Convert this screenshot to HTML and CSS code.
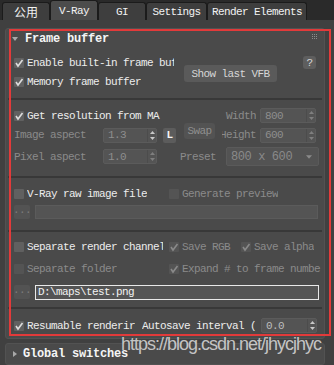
FILE: index.html
```html
<!DOCTYPE html>
<html>
<head>
  <meta charset="utf-8">
  <link rel="stylesheet" href="styles.css">
  <title>V-Ray Frame buffer</title>
</head>
<body>
  <div class="tabs">
    <div class="tab cjk">公用</div>
    <div class="tab active">V-Ray</div>
    <div class="tab">GI</div>
    <div class="tab tab-settings">Settings</div>
    <div class="tab tab-render">Render Elements</div>
  </div>

  <div class="panel">
    <div class="rollout">
      <div class="roll-head">
        <span class="tri-down"></span>
        <span class="roll-title">Frame buffer</span>
        <svg class="grip" width="6" height="6" viewBox="0 0 6 6">
          <rect x="0" y="0" width="1" height="1"/><rect x="2" y="0" width="1" height="1"/><rect x="4" y="0" width="1" height="1"/>
          <rect x="0" y="2" width="1" height="1"/><rect x="2" y="2" width="1" height="1"/><rect x="4" y="2" width="1" height="1"/>
          <rect x="0" y="4" width="1" height="1"/><rect x="2" y="4" width="1" height="1"/><rect x="4" y="4" width="1" height="1"/>
        </svg>
      </div>

      <!-- frame buffer -->
      <div class="sec sec-fb">
        <div class="fb-left">
          <div class="row"><span class="cb on"><svg viewBox="0 0 10 10"><polyline points="2,5 4,8 8.5,2"/></svg></span><span class="txt clip-fb">Enable built-in frame buf</span></div>
          <div class="row"><span class="cb on"><svg viewBox="0 0 10 10"><polyline points="2,5 4,8 8.5,2"/></svg></span><span class="txt">Memory frame buffer</span></div>
        </div>
        <div class="btn btn-vfb">Show last VFB</div>
        <div class="btn btn-help">?</div>
      </div>
      <div class="sep"></div>

      <!-- resolution -->
      <div class="sec sec-res">
        <div class="res-grid">
          <div class="row g-getres"><span class="cb on"><svg viewBox="0 0 10 10"><polyline points="2,5 4,8 8.5,2"/></svg></span><span class="txt clip-res">Get resolution from MA</span></div>
          <div class="lbl dim g-wlbl">Width</div>
          <div class="spin g-wspin"><span>800</span><i class="arrows"><svg viewBox="0 0 5 9"><polygon points="0,3 2.5,0 5,3"/><polygon points="0,6 5,6 2.5,9"/></svg></i></div>

          <div class="lbl dim g-ialbl">Image aspect</div>
          <div class="spin g-iaspin"><span>1.3</span><i class="arrows lit"><svg viewBox="0 0 5 9"><polygon points="0,3 2.5,0 5,3"/><polygon points="0,6 5,6 2.5,9"/></svg></i></div>
          <div class="btn btn-l g-l">L</div>
          <div class="btn btn-swap g-swap">Swap</div>
          <div class="lbl dim g-hlbl">Height</div>
          <div class="spin g-hspin"><span>600</span><i class="arrows"><svg viewBox="0 0 5 9"><polygon points="0,3 2.5,0 5,3"/><polygon points="0,6 5,6 2.5,9"/></svg></i></div>

          <div class="lbl dim g-palbl">Pixel aspect</div>
          <div class="spin g-paspin"><span>1.0</span><i class="arrows"><svg viewBox="0 0 5 9"><polygon points="0,3 2.5,0 5,3"/><polygon points="0,6 5,6 2.5,9"/></svg></i></div>
          <div class="lbl dim g-prelbl">Preset</div>
          <div class="drop g-drop"><span>800 x 600</span><svg viewBox="0 0 7 4"><polygon points="0,0 7,0 3.5,4"/></svg></div>
        </div>
      </div>
      <div class="sep"></div>

      <!-- raw image -->
      <div class="sec sec-raw">
        <div class="row">
          <div class="cell-l"><span class="cb"></span><span class="txt">V-Ray raw image file</span></div>
          <span class="cb dimbox"></span><span class="txt dim">Generate preview</span>
        </div>
        <div class="path-row">
          <div class="btn btn-dots">...</div>
          <div class="field"></div>
        </div>
      </div>
      <div class="sep"></div>

      <!-- render channels -->
      <div class="sec sec-chan">
        <div class="row">
          <div class="cell-l"><span class="cb"></span><span class="txt clip-chan">Separate render channel</span></div>
          <span class="cb dimbox on"><svg viewBox="0 0 10 10"><polyline points="2,5 4,8 8.5,2"/></svg></span><span class="txt dim w-rgb">Save RGB</span>
          <span class="cb dimbox on"><svg viewBox="0 0 10 10"><polyline points="2,5 4,8 8.5,2"/></svg></span><span class="txt dim">Save alpha</span>
        </div>
        <div class="row row-folder">
          <div class="cell-l"><span class="cb dimbox"></span><span class="txt dim">Separate folder</span></div>
          <span class="cb dimbox on"><svg viewBox="0 0 10 10"><polyline points="2,5 4,8 8.5,2"/></svg></span><span class="txt dim clip-expand">Expand # to frame numbe</span>
        </div>
        <div class="path-row path-row-2">
          <div class="btn btn-dots">...</div>
          <div class="field field-on">D:\maps\test.png</div>
        </div>
      </div>
      <div class="sep"></div>

      <!-- resumable -->
      <div class="sec sec-resume">
        <div class="row">
          <div class="cell-resume"><span class="cb on"><svg viewBox="0 0 10 10"><polyline points="2,5 4,8 8.5,2"/></svg></span><span class="txt clip-resume">Resumable renderir</span></div>
          <span class="txt w-auto">Autosave interval (</span>
          <div class="spin spin-auto"><span>0.0</span><i class="arrows lit"><svg viewBox="0 0 5 9"><polygon points="0,3 2.5,0 5,3"/><polygon points="0,6 5,6 2.5,9"/></svg></i></div>
        </div>
      </div>
    </div>

    <div class="rollout rollout-closed">
      <div class="roll-head">
        <span class="tri-right"></span>
        <span class="roll-title">Global switches</span>
      </div>
    </div>
  </div>

  <div class="mark"></div>
  <div class="watermark">https://blog.csdn.net/jhycjhyc</div>
</body>
</html>
```

FILE: styles.css
```css
* {
  box-sizing: border-box;
}

body {
  margin: 0;
  width: 334px;
  height: 365px;
  overflow: hidden;
  position: relative;
  background-color: #404040;
  color: #ededed;
  font-family: "Liberation Mono", "DejaVu Sans Mono", monospace;
  font-size: 11px;
  letter-spacing: -0.6px;
}

/* tabs */
.tabs {
  display: flex;
  align-items: flex-end;
  height: 20px;
  padding-left: 2px;
  background-color: #2a2a2a;
}

.tab {
  width: 48px;
  height: 18px;
  display: flex;
  align-items: center;
  justify-content: center;
  background-color: #3e3e3e;
  border: 1px solid #1b1b1b;
  border-bottom: none;
  border-radius: 3px 3px 0 0;
  color: #f2f2f2;
}

.tab.cjk {
  font-family: "Noto Sans CJK SC", sans-serif;
  font-size: 12px;
  letter-spacing: 0;
}

.tab.active {
  height: 20px;
  background-color: #4c4c4c;
}

.tab-settings {
  width: 61px;
}

.tab-render {
  width: 100px;
}

/* panel and rollouts */
.panel {
  padding: 8px 0 0 5px;
}

.rollout {
  width: 320px;
  background-color: #4a4a4a;
  border: 1px solid #525252;
  border-radius: 3px;
}

.rollout-closed {
  margin-top: 4px;
}

.roll-head {
  height: 20px;
  display: flex;
  align-items: center;
  padding-left: 6px;
}

.roll-title {
  margin-left: 7px;
  font-size: 12px;
  font-weight: bold;
  letter-spacing: -0.2px;
  color: #f5f5f5;
}

.tri-down {
  width: 0;
  height: 0;
  border-left: 3px solid transparent;
  border-right: 3px solid transparent;
  border-top: 4px solid #a8a8a8;
}

.tri-right {
  width: 0;
  height: 0;
  border-top: 3px solid transparent;
  border-bottom: 3px solid transparent;
  border-left: 4px solid #a8a8a8;
  margin-left: 1px;
  margin-right: -1px;
}

.grip {
  margin-left: auto;
  margin-right: 6px;
  margin-top: -4px;
  fill: #8c8c8c;
}

.sep {
  height: 2px;
  margin: 0 2px;
  background-color: #383838;
}

.sec {
  padding-left: 8px;
}

/* rows and checkboxes */
.row {
  display: flex;
  align-items: center;
  height: 14px;
}

.cell-l {
  display: flex;
  align-items: center;
  width: 155px;
}

.cb {
  flex: none;
  width: 10px;
  height: 10px;
  margin-right: 3px;
  background-color: #606060;
  border-radius: 1px;
}

.cb svg {
  display: block;
  width: 10px;
  height: 10px;
  fill: none;
  stroke: #dcdcdc;
  stroke-width: 1.6;
}

.cb.dimbox {
  background-color: #545454;
}

.cb.dimbox svg {
  stroke: #8a8a8a;
}

.txt {
  white-space: nowrap;
  overflow: hidden;
}

.dim {
  color: #8b8b8b;
}

.lbl {
  white-space: nowrap;
  overflow: hidden;
}

/* buttons */
.btn {
  display: flex;
  align-items: center;
  justify-content: center;
  background-color: #5a5a5a;
  border-radius: 3px;
  color: #d6d6d6;
}

/* frame buffer section */
.sec-fb {
  display: flex;
  height: 49px;
  padding-top: 4px;
}

.fb-left {
  width: 170px;
}

.fb-left .row {
  height: 19px;
}

.clip-fb {
  width: 147px;
}

.btn-vfb {
  width: 93px;
  height: 17px;
  margin-top: 12px;
}

.btn-help {
  width: 13px;
  height: 13px;
  margin-left: 26px;
  margin-top: 3px;
  background-color: #5e5e5e;
}

/* resolution section */
.sec-res {
  padding-top: 8px;
  padding-bottom: 10px;
}

.res-grid {
  display: grid;
  grid-template-columns: 89px 54px 6px 13px 8px 31px 7px 34px 4px 56px;
  grid-template-rows: 15px 16px 19px;
  row-gap: 4px;
  align-items: center;
}

.g-getres { grid-column: 1 / 4; grid-row: 1; }
.clip-res { width: 134px; }
.g-wlbl { grid-column: 8; grid-row: 1; }
.g-wspin { grid-column: 10; grid-row: 1; }
.g-ialbl { grid-column: 1; grid-row: 2; }
.g-iaspin { grid-column: 2; grid-row: 2; }
.g-l { grid-column: 4; grid-row: 2; }
.g-swap { grid-column: 6; grid-row: 1 / 3; }
.g-hlbl { grid-column: 8; grid-row: 2; }
.g-hspin { grid-column: 10; grid-row: 2; }
.g-palbl { grid-column: 1; grid-row: 3; }
.g-paspin { grid-column: 2; grid-row: 3; }
.g-prelbl { grid-column: 5 / 8; grid-row: 3; padding-left: 4px; }
.g-drop { grid-column: 8 / 11; grid-row: 3; margin-left: 4px; margin-right: -3px; }

.g-wlbl,
.g-hlbl {
  display: flex;
  justify-content: flex-end;
}

.spin {
  display: flex;
  align-items: center;
  height: 15px;
  padding-left: 4px;
  background-color: #545454;
  border: 1px solid #5b5b5b;
  border-radius: 2px;
  color: #8e8e8e;
}

.spin span {
  flex: 1;
}

.arrows {
  display: flex;
  align-items: center;
  justify-content: center;
  width: 9px;
  height: 100%;
  border-left: 1px solid #4c4c4c;
}

.arrows svg {
  width: 5px;
  height: 9px;
  fill: #7f7f7f;
}

.arrows.lit svg {
  fill: #c8c8c8;
}

.btn-l {
  height: 15px;
  background-color: #5c5c5c;
  border-radius: 2px;
  color: #f5f5f5;
  font-weight: bold;
}

.btn-swap {
  height: 16px;
  margin-top: 10px;
  background-color: #535353;
  color: #8f8f8f;
}

.drop {
  display: flex;
  align-items: center;
  height: 19px;
  padding: 0 6px 0 4px;
  background-color: #535353;
  border: 1px solid #5a5a5a;
  border-radius: 2px;
  color: #8a8a8a;
  font-size: 12px;
  letter-spacing: -0.4px;
}

.drop span {
  flex: 1;
}

.drop svg {
  width: 6px;
  height: 4px;
  fill: #8a8a8a;
}

/* raw image section */
.sec-raw {
  padding-top: 9px;
  padding-bottom: 11px;
}

.path-row {
  display: flex;
  height: 14px;
  margin-top: 4px;
}

.btn-dots {
  width: 16px;
  height: 14px;
  margin-right: 5px;
  background-color: #535353;
  border-radius: 2px;
  color: #7c7c7c;
  align-items: flex-end;
  padding-bottom: 3px;
}

.field {
  width: 283px;
  background-color: #545454;
  border: 1px solid #5b5b5b;
}

/* render channels section */
.sec-chan {
  padding-top: 8px;
  padding-bottom: 7px;
}

.clip-chan {
  width: 136px;
}

.w-rgb {
  width: 59px;
}

.row-folder {
  margin-top: 8px;
}

.clip-expand {
  width: 140px;
}

.path-row-2 {
  height: 15px;
  margin-top: 9px;
}

.field-on {
  width: 284px;
  height: 15px;
  border: 1px solid #e8e8e8;
  padding-left: 2px;
  font-size: 11px;
  line-height: 13px;
  color: #f2f2f2;
}

/* resumable section */
.sec-resume {
  padding-top: 9px;
  padding-bottom: 5px;
}

.sec-resume .row {
  height: 15px;
}

.cell-resume {
  display: flex;
  align-items: center;
  width: 128px;
}

.clip-resume {
  width: 108px;
}

.w-auto {
  width: 119px;
}

.spin-auto {
  width: 56px;
  color: #bdbdbd;
}

/* screenshot annotations */
.mark {
  position: absolute;
  left: 9px;
  top: 29px;
  width: 322px;
  height: 307px;
  border: 2px solid #e23a3a;
}

.watermark {
  position: absolute;
  left: 121px;
  top: 334px;
  font-family: "Liberation Sans", Arial, sans-serif;
  font-size: 18px;
  letter-spacing: -1px;
  color: #c4c4c4;
}
```
